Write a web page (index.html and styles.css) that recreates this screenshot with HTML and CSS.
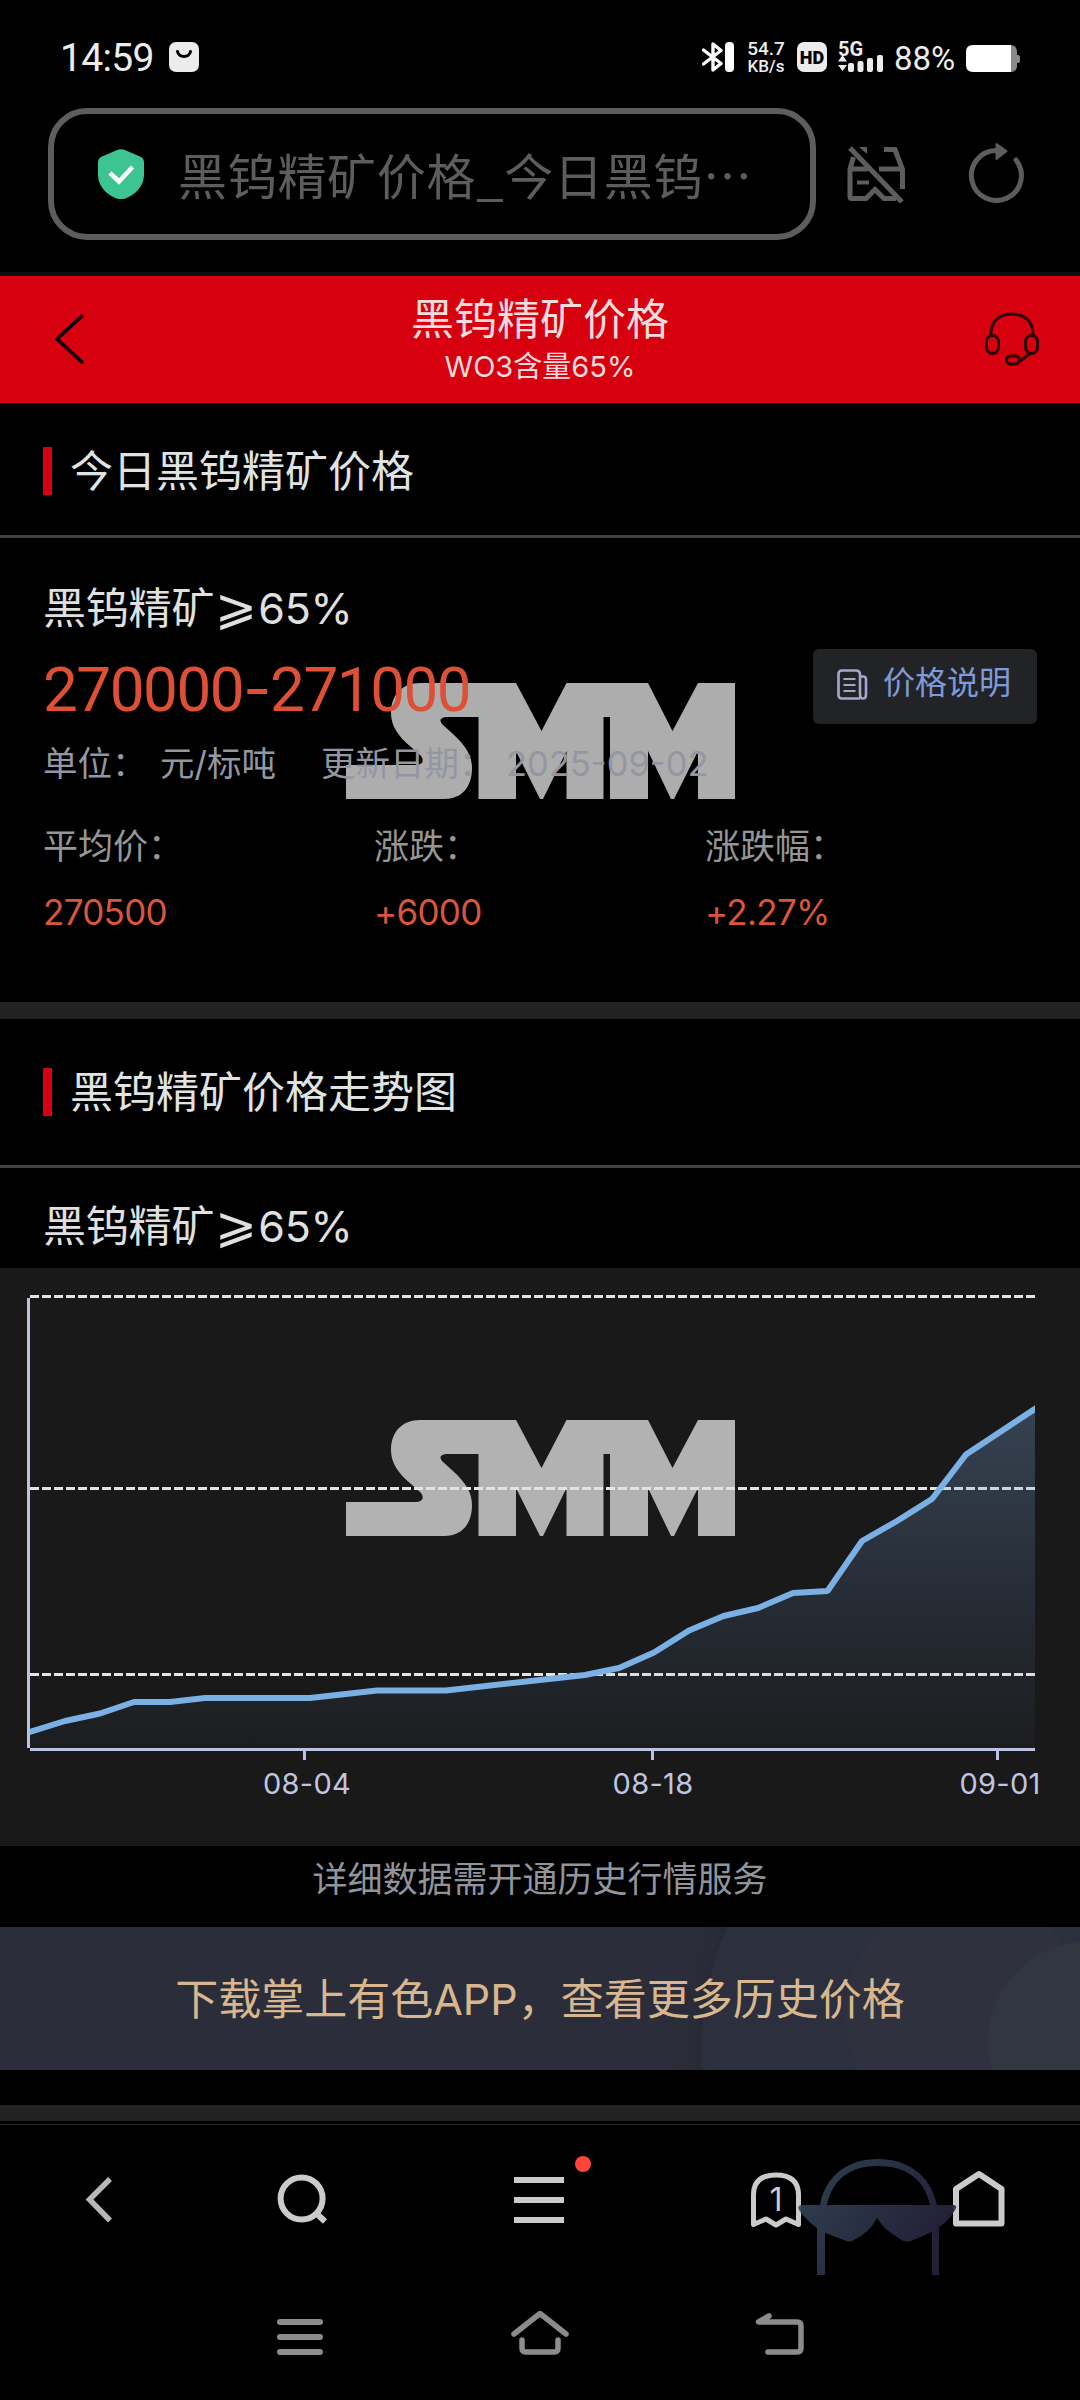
FILE: index.html
```html
<!DOCTYPE html>
<html lang="zh-CN">

<head>
    <meta charset="utf-8">
    <title>黑钨精矿价格_今日黑钨精矿价格</title>
    <link rel="stylesheet" href="styles.css">
</head>

<body>
    <!-- phone status bar -->
    <div class="status_bar">
        <span class="clock">14:59</span>
        <svg class="app_icon" width="30" height="30" viewBox="0 0 30 30">
            <rect width="30" height="30" rx="7" fill="#ececec"/>
            <path d="M8.500 9.500c1 6.500 12 6.500 13 0" fill="none" stroke="#000" stroke-width="3" stroke-linecap="round"/>
        </svg>
        <div class="status_right">
            <svg width="32" height="30" viewBox="0 0 32 30">
                <path d="M1.500 8L19 21.500 11 28V2l8 6.500L1.500 22" fill="none" stroke="#fff" stroke-width="3.400" stroke-linecap="round" stroke-linejoin="round"/>
                <rect x="23" width="9" height="30" rx="4" fill="#fff"/>
            </svg>
            <div class="net_speed"><span>54.7</span><span>KB/s</span></div>
            <div class="hd_badge">HD</div>
            <div class="signal">
                <span class="signal_text">5G</span>
                <svg width="46" height="17" viewBox="0 0 46 17">
                    <path d="M0 6.500L4.500 0 9 6.500zM0 10h9l-4.500 6z" fill="#ececec"/>
                    <rect x="10" y="8" width="6" height="9" rx="2" fill="#ececec"/>
                    <rect x="19.500" y="6" width="6" height="11" rx="2" fill="#ececec"/>
                    <rect x="29" y="3" width="6" height="14" rx="2" fill="#ececec"/>
                    <rect x="39" width="6" height="17" rx="2" fill="#ececec"/>
                </svg>
            </div>
            <span class="battery_text">88%</span>
            <svg class="battery" width="54" height="27" viewBox="0 0 54 27">
                <path d="M44 0c5 0 7 3 7 7v3h1q2 0 2 2v4q0 2-2 2h-1v3c0 4-3 6-7 6z" fill="#8a8a8a"/>
                <path d="M45 0v27H7q-7 0-7-7V7q0-7 7-7z" fill="#fff"/>
            </svg>
        </div>
    </div>

    <!-- browser address bar -->
    <div class="browser_bar">
        <div class="url_box">
            <svg width="46" height="50" viewBox="0 0 46 50">
                <path d="M18 1.500q5-2.500 10 0l14 6q4 1.500 4 6V26c0 12-10 20-18 23.300q-5 1.700-10 0C10 46 0 38 0 26V13.500Q0 9 4 7.500z" fill="#3cc493"/>
                <path d="M12 24l9 8.500L34.500 18" fill="none" stroke="#fff" stroke-width="4.500"/>
            </svg>
            <span class="url_text">黑钨精矿价格_今日黑钨⋯</span>
        </div>
        <svg class="mask_icon" width="58" height="58" viewBox="0 0 58 58" fill="none" stroke="#5d5d5d" stroke-width="5">
            <path d="M6.500 12L3 24v27.500q0 2 2 2h14l9-9 9 9h12M3 24h18M32 24h23M37 4.500h11l7.500 20V44"/>
            <path d="M10 37.500h12M28.500 44.500L37 53.500" stroke-width="4"/>
            <path d="M12 2h8v7z" fill="#5d5d5d" stroke="none"/>
            <path d="M3 3l52 54"/>
        </svg>
        <svg width="56" height="64" viewBox="0 0 56 64">
            <path d="M28 8.500a25 25 0 1 0 20 9.500" fill="none" stroke="#5d5d5d" stroke-width="5" stroke-linecap="round"/>
            <path d="M28.500 2v15l10-8z" fill="#5d5d5d" stroke="#5d5d5d" stroke-width="2" stroke-linejoin="round"/>
        </svg>
    </div>

    <header class="page_header">
        <svg width="29" height="50" viewBox="0 0 29 50">
            <path d="M28 1L2 25l26 24" fill="none" stroke="#0d0000" stroke-width="3.600"/>
        </svg>
        <div class="header_title">
            <h1>黑钨精矿价格</h1>
            <p>WO3含量65%</p>
        </div>
        <svg width="54" height="54" viewBox="0 0 54 54" fill="none" stroke="#2b0003" stroke-width="3">
            <path d="M6 24C5 10 14 2 27 2s22 8 21 22M46 41l-11 8"/>
            <rect x="1.500" y="23.500" width="12" height="18" rx="6"/>
            <rect x="40.500" y="23.500" width="12" height="18" rx="6"/>
            <rect x="21.500" y="44" width="13" height="8" rx="4"/>
        </svg>
    </header>

    <!-- today price -->
    <section class="today">
        <h2 class="section_title">今日黑钨精矿价格</h2>
        <div class="price_card">
            <svg class="watermark" viewBox="0 0 389 116">
                <path id="smm" d="M0 116V82H69C77 82 79 77 74 72L65 64C52 53 45 43 45 30C45 12 56 0 74 0H170L195.500 48 220.500 0H302L326.500 48 352 0H389V116H352V68L328 116H325L302 68V116H264V34H257.500V116H220.500V68L197 116H194L170 68V116H132.500V34H102C95 34 92 37 97 42L107 51C119 62 126 72 126 85C126 104 116 116 98 116Z"/>
            </svg>
            <div class="price_top">
                <div>
                    <h3 class="product_name">黑钨精矿<span class="geq">⩾</span>65%</h3>
                    <div class="price">270000<i>-</i>271000</div>
                </div>
                <a class="explain_btn">
                    <svg width="31" height="31" viewBox="0 0 31 31" fill="none" stroke="#a4a9cc" stroke-width="2.600">
                        <path d="M23 29.500H5q-3.500 0-3.500-3.500V5Q1.500 1.500 5 1.500h14q4 0 4 4v20q0 4 3 4t3-4V10q0-2.500-3-2.500h-3"/>
                        <path d="M6.500 10h12M6.500 16h12M6.500 22h12" stroke-width="2.200"/>
                    </svg>
                    <span>价格说明</span>
                </a>
            </div>
            <div class="unit_row">
                <span class="unit_label">单位：</span>
                <span class="unit_value">元/标吨</span>
                <span class="date_label">更新日期：</span>
                <span class="date_value">2025-09-02</span>
            </div>
            <dl class="stats">
                <div><dt>平均价：</dt><dd>270500</dd></div>
                <div><dt>涨跌：</dt><dd>+6000</dd></div>
                <div><dt>涨跌幅：</dt><dd>+2.27%</dd></div>
            </dl>
        </div>
    </section>

    <!-- trend chart -->
    <section class="trend">
        <h2 class="section_title">黑钨精矿价格走势图</h2>
        <h3 class="product_name chart_name">黑钨精矿<span class="geq">⩾</span>65%</h3>
        <svg class="chart" width="1080" height="578" viewBox="0 1268 1080 578">
            <defs>
                <linearGradient id="area_fill" gradientUnits="userSpaceOnUse" x1="0" y1="1409" x2="0" y2="1748">
                    <stop offset="0" stop-color="#7ea6dc" stop-opacity="0.290"/>
                    <stop offset="1" stop-color="#6f9ae0" stop-opacity="0.030"/>
                </linearGradient>
            </defs>
            <use href="#smm" x="346" y="1420" fill="#b2b2b2"/>
            <path d="M30 1296.500H1035M30 1488.500H1035M30 1674.500H1035" stroke="#e3e3e3" stroke-width="3" stroke-dasharray="9 3"/>
            <path d="M30 1732L65 1721 100 1713.500 134 1702H170L205 1698H310L377 1690.500H446L540 1680 585 1675 619 1668 654 1652.500 689 1630.500 723.500 1616 758 1608 793 1593 827.500 1591 862 1541 897 1521 932 1499 966 1454.500 1035 1409V1748H30z" fill="url(#area_fill)"/>
            <svg x="30" y="1268" width="1005" height="578" viewBox="30 1268 1005 578">
                <path d="M28 1732.500L65 1721 100 1713.500 134 1702H170L205 1698H310L377 1690.500H446L540 1680 585 1675 619 1668 654 1652.500 689 1630.500 723.500 1616 758 1608 793 1593 827.500 1591 862 1541 897 1521 932 1499 966 1454.500 1037 1407.500" fill="none" stroke="#7ab0e4" stroke-width="6" stroke-linejoin="bevel"/>
            </svg>
            <path d="M28.500 1298V1748M30 1749.500H1035M304.500 1751V1760M652.500 1751V1760M997.500 1751V1760" stroke="#bcc3e2" stroke-width="3"/>
            <g class="axis_text">
                <text x="307" y="1794">08-04</text>
                <text x="653" y="1794">08-18</text>
                <text x="1000" y="1794">09-01</text>
            </g>
        </svg>
        <p class="chart_note">详细数据需开通历史行情服务</p>
        <a class="download_banner">下载掌上有色APP，查看更多历史价格</a>
    </section>

    <!-- browser toolbar -->
    <nav class="toolbar">
        <svg width="60" height="60" viewBox="0 0 60 60">
            <path d="M41 9L20.500 29.500 41 50.500" fill="none" stroke="#b8b8b8" stroke-width="5.500"/>
        </svg>
        <svg width="60" height="60" viewBox="0 0 60 60" fill="none" stroke="#cbcbcb" stroke-width="6">
            <circle cx="29.600" cy="28.500" r="21"/>
            <path d="M44 43l9 8.500"/>
        </svg>
        <svg class="menu_icon" width="60" height="60" viewBox="0 0 60 60">
            <path d="M5 10h50M5 30h50M5 50h50" stroke="#cbcbcb" stroke-width="6"/>
            <circle cx="74" cy="-6" r="8" fill="#ff453a"/>
        </svg>
        <svg width="60" height="60" viewBox="0 0 60 60">
            <path d="M7.500 54.500V25C7.500 11 16 5 30 5s22.500 6 22.500 20v29.500L40 49l-10 6-10-6z" fill="none" stroke="#cbcbcb" stroke-width="5" stroke-linejoin="round"/>
            <text class="tab_count" x="30" y="41">1</text>
        </svg>
        <svg width="60" height="60" viewBox="0 0 60 60">
            <path d="M7 53.500V19L30 4l22.500 15v34.500z" fill="none" stroke="#cbcbcb" stroke-width="6" stroke-linejoin="round"/>
        </svg>
        <svg class="private_icon" width="160" height="116" viewBox="0 0 160 116">
            <defs>
                <linearGradient id="glass" x1="0" y1="0" x2="1" y2="0.500">
                    <stop offset="0" stop-color="#344a5a"/>
                    <stop offset="1" stop-color="#28233d"/>
                </linearGradient>
            </defs>
            <path fill="url(#glass)" d="M22 46C28 15 51 0 80 0S132 15 139 46H156Q160 47 157 51Q150 63 141 68V116H134V73L113 82Q107 84 102 80Q86 71 79 59Q72 73 56 81Q51 84 46 81L27 74V116H19V69Q8 61 1 51Q-1 46 4 46ZM29 46H132C126 19 107 7 80 7S35 19 29 46Z"/>
        </svg>
    </nav>

    <!-- system navigation -->
    <div class="system_nav">
        <svg width="60" height="50" viewBox="0 0 60 50">
            <path d="M10 12h40M10 27h40M10 42h40" stroke="#8c8c8c" stroke-width="6" stroke-linecap="round"/>
        </svg>
        <svg width="60" height="50" viewBox="0 0 60 50" fill="none" stroke="#8c8c8c" stroke-width="5.500" stroke-linecap="round" stroke-linejoin="round">
            <path d="M4 24L30 3.500 56 24M12 30v8q0 4 4 4h28q4 0 4-4v-8"/>
        </svg>
        <svg width="60" height="50" viewBox="0 0 60 50" fill="none" stroke="#8c8c8c" stroke-width="5.500" stroke-linecap="round" stroke-linejoin="round">
            <path d="M19 6L8.500 12H47q4 0 4 4v22q0 4-4 4H18"/>
        </svg>
    </div>
</body>

</html>
```

FILE: styles.css
```css
* {
    box-sizing: border-box;
    margin: 0;
    padding: 0;
}

body {
    width: 1080px;
    height: 2400px;
    overflow: hidden;
    background: #000;
    font-family: Inter, "Noto Sans CJK SC", sans-serif;
    color: #e0e0e0;
}

h1, h2, h3 {
    font-weight: normal;
}

svg {
    display: block;
    flex: none;
}

/* status bar */
.status_bar {
    display: flex;
    align-items: center;
    height: 108px;
    padding: 6px 60px 0 60px;
    color: #ececec;
    font-family: Roboto, sans-serif;
}

.clock {
    width: 109px;
    padding-top: 2px;
    font-size: 39px;
    line-height: 40px;
    letter-spacing: -0.7px;
}

.status_right {
    display: flex;
    align-items: center;
    margin-left: auto;
}

.net_speed {
    display: flex;
    flex-direction: column;
    align-items: center;
    gap: 1px;
    width: 40px;
    margin: 0 11px 0 12px;
    font-size: 17px;
    font-weight: 500;
    line-height: 17px;
}

.net_speed span:first-child {
    font-size: 19px;
}

.hd_badge {
    width: 30px;
    height: 30px;
    margin-right: 11px;
    border-radius: 7px;
    background: #ececec;
    color: #000;
    font-size: 18px;
    font-weight: 900;
    line-height: 31px;
    text-align: center;
}

.signal {
    width: 46px;
    margin-right: 10px;
}

.signal_text {
    display: block;
    height: 13px;
    font-size: 20px;
    font-weight: bold;
    line-height: 15px;
}

.battery_text {
    width: 72px;
    padding-top: 4px;
    font-size: 33px;
    line-height: 34px;
}

.battery {
    margin-top: 2px;
}

/* browser address bar */
.browser_bar {
    display: flex;
    align-items: center;
    height: 164px;
    padding: 0 56px 32px 48px;
}

.url_box {
    display: flex;
    align-items: center;
    width: 768px;
    height: 132px;
    padding-left: 44px;
    border: 6px solid #5d5d5d;
    border-radius: 39px;
}

.url_text {
    margin-left: 34px;
    font-family: "Noto Sans CJK SC", sans-serif;
    font-size: 49px;
    line-height: 60px;
    letter-spacing: 0.7px;
    color: #5d5d5d;
    white-space: nowrap;
}

.mask_icon {
    margin: 0 63px 0 31px;
}

/* red page header */
.page_header {
    display: flex;
    align-items: center;
    justify-content: space-between;
    height: 131px;
    padding: 0 41px 2px 55px;
    border-top: 4px solid #111;
    background: #d7000f;
    color: #f6dcdc;
}

.header_title {
    padding-left: 11px;
    text-align: center;
}

.header_title h1 {
    font-size: 43px;
    line-height: 52px;
}

.header_title p {
    margin-top: 4px;
    font-size: 29px;
    line-height: 36px;
}

.section_title {
    display: flex;
    align-items: center;
    height: 135px;
    padding: 3px 0 0 43px;
    border-bottom: 3px solid #414141;
    font-size: 43px;
    line-height: 50px;
    color: #dfe3e4;
}

.section_title::before {
    content: "";
    width: 9px;
    height: 48px;
    margin-right: 18px;
    background: #d7000f;
}

/* price card */
.price_card {
    position: relative;
    height: 464px;
    padding: 43px 43px 0 43px;
}

.watermark {
    position: absolute;
    left: 346px;
    top: 145px;
    width: 389px;
    height: 116px;
    fill: #adadad;
}

.price_top, .unit_row, .stats {
    position: relative;
}

.price_top {
    display: flex;
    justify-content: space-between;
    height: 143px;
}

.product_name {
    height: 54px;
    font-size: 43px;
    line-height: 54px;
    letter-spacing: -0.2px;
}

.geq {
    display: inline-block;
    width: 44px;
    font-family: "DejaVu Sans", sans-serif;
    font-size: 50px;
    line-height: 50px;
    text-align: center;
}

.price {
    margin-top: 19px;
    font-family: Roboto, sans-serif;
    font-size: 62px;
    line-height: 70px;
    color: #dd5036;
    letter-spacing: -1.5px;
}

.price i {
    font-family: Inter, sans-serif;
    font-style: normal;
}

.explain_btn {
    display: flex;
    align-items: center;
    width: 224px;
    height: 75px;
    margin-top: 68px;
    padding: 0 0 5px 24px;
    border-radius: 6px;
    background: #222327;
    color: #7e9ad8;
    font-size: 32px;
    line-height: 40px;
}

.explain_btn span {
    margin: -3px 0 0 15px;
}

.unit_row {
    display: flex;
    margin-top: 15px;
    font-size: 34.5px;
    line-height: 50px;
    color: #9496a2;
    white-space: nowrap;
}

.unit_label {
    width: 117px;
}

.unit_value {
    width: 161px;
}

.date_label {
    width: 185px;
}

.stats {
    display: grid;
    grid-template-columns: 331px 331px 331px;
    margin-top: 32px;
    font-size: 35px;
    line-height: 50px;
}

.stats dt {
    color: #969696;
}

.stats dd {
    margin-top: 16px;
    color: #d8563e;
    letter-spacing: -0.7px;
}

/* trend chart */
.trend {
    border-top: 17px solid #222224;
}

.trend .section_title {
    height: 149px;
    padding-top: 0;
}

.trend .chart_name {
    height: 100px;
    padding: 31px 0 0 43px;
}

.chart {
    background: #191919;
}

.axis_text text {
    fill: #bfc5e2;
    font-size: 29px;
    letter-spacing: 0.3px;
    text-anchor: middle;
}

.chart_note {
    height: 81px;
    padding-top: 8px;
    font-size: 35px;
    line-height: 50px;
    text-align: center;
    color: #92949c;
}

.download_banner {
    display: block;
    height: 143px;
    background:
        radial-gradient(circle at 1088px 115px, #323641 0 99px, transparent 101px),
        radial-gradient(circle at 966px 88px, #2f323e 0 119px, transparent 121px),
        radial-gradient(circle at 1039px 130px, #2c2f3d 0 337px, #272934 339px, #292b36 346px, transparent 372px),
        #2b2e3a;
    color: #d9b78e;
    font-size: 43px;
    line-height: 145px;
    text-align: center;
}

/* browser toolbar */
.toolbar {
    position: relative;
    display: grid;
    grid-template-columns: 198px 208px 266px 208px 198px;
    align-items: center;
    justify-items: center;
    height: 151px;
    margin-top: 54px;
    border-top: 1px solid #282828;
    box-shadow: 0 -3px #000, 0 -19px #222224;
}

.menu_icon {
    overflow: visible;
}

.tab_count {
    fill: #cbcbcb;
    font-size: 32px;
    text-anchor: middle;
}

.private_icon {
    position: absolute;
    left: 798px;
    top: 34px;
    opacity: 0.9;
}

/* system navigation */
.system_nav {
    display: grid;
    grid-template-columns: repeat(3, 240px);
    justify-content: center;
    justify-items: center;
    padding-top: 35px;
}
```
